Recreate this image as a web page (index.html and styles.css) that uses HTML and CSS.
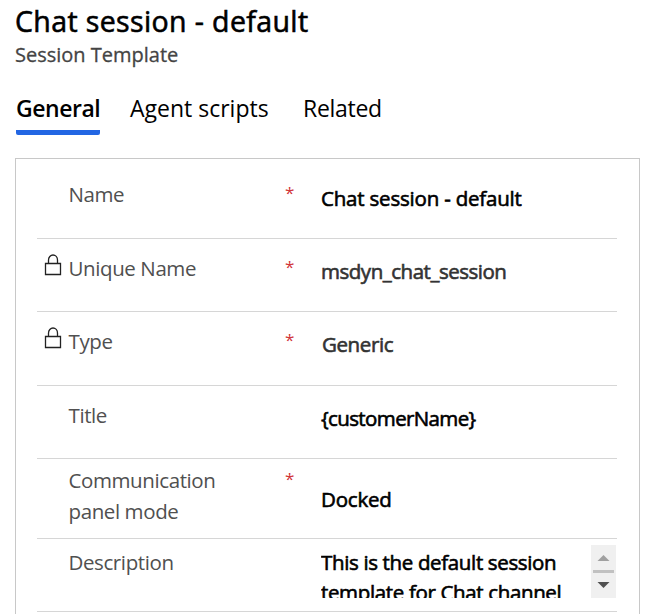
FILE: index.html
```html
<!DOCTYPE html>
<html lang="en">
<head>
<meta charset="utf-8">
<title>Chat session - default</title>
<link rel="stylesheet" href="styles.css">
</head>
<body>
<header class="header">
  <h1 class="title">Chat session - default</h1>
  <p class="subtitle">Session Template</p>
</header>
<nav class="tabs">
  <a class="tab tab-active">General</a>
  <a class="tab tab-scripts">Agent scripts</a>
  <a class="tab tab-related">Related</a>
</nav>
<main class="panel">
  <div class="row row-name">
    <span class="lock"></span>
    <span class="label">Name</span>
    <span class="required">*</span>
    <span class="value">Chat session - default</span>
  </div>
  <div class="row">
    <svg class="lock" viewBox="0 0 18 22"><path d="M1.500 9.500h15v11h-15zM4.500 9.500V6a4.500 5 0 0 1 9 0v3.500"/></svg>
    <span class="label">Unique Name</span>
    <span class="required">*</span>
    <span class="value readonly schema">msdyn_chat_session</span>
  </div>
  <div class="row row-type">
    <svg class="lock" viewBox="0 0 18 22"><path d="M1.500 9.500h15v11h-15zM4.500 9.500V6a4.500 5 0 0 1 9 0v3.500"/></svg>
    <span class="label">Type</span>
    <span class="required">*</span>
    <span class="value readonly generic">Generic</span>
  </div>
  <div class="row">
    <span class="lock"></span>
    <span class="label">Title</span>
    <span class="required"></span>
    <span class="value customer">{customerName}</span>
  </div>
  <div class="row row-mode">
    <span class="lock"></span>
    <span class="label mode">Communication<br>panel mode</span>
    <span class="required">*</span>
    <span class="value docked">Docked</span>
  </div>
  <div class="row row-description">
    <span class="lock"></span>
    <span class="label">Description</span>
    <span class="required"></span>
    <div class="value textarea">
      <div class="text">This is the default session<br>template for Chat channel</div>
      <svg class="scrollbar" viewBox="0 0 25 53"><path class="up" d="M6.500 16 12.500 10l6 6z"/><path class="thumb" d="M2 25h21v3H2z"/><path class="down" d="M6.500 37h12l-6 6z"/></svg>
    </div>
  </div>
</main>
</body>
</html>
```

FILE: styles.css
```css
* { box-sizing: border-box; }

body {
  margin: 0;
  height: 614px;
  overflow: hidden;
  background: #fff;
  color: #000;
  font-family: "Open Sans", "Noto Sans", sans-serif;
}

.header { padding: 1px 0 0 15px; white-space: nowrap; }

.title {
  margin: 0;
  font-size: 28.500px;
  line-height: 40px;
  font-weight: 400;
  letter-spacing: 0.38px;
  -webkit-text-stroke: 0.6px;
}

.subtitle {
  margin: 0;
  font-size: 20px;
  line-height: 28px;
  color: #444;
  -webkit-text-stroke: 0.3px;
}

.tabs {
  display: flex;
  gap: 30px;
  margin-top: 20px;
  padding-left: 16px;
  height: 69px;
}

.tab { height: 46px; font-size: 23px; line-height: 38px; white-space: nowrap; }

.tab-active {
  width: 84px;
  border-bottom: 5px solid #2266e3;
  border-radius: 2px;
  font-weight: 600;
  letter-spacing: -0.45px;
}

.tab-scripts { width: 138px; }

.tab-related { margin-left: 5px; letter-spacing: -0.3px; }

.panel {
  width: 625px;
  height: 480px;
  margin-left: 15px;
  padding: 0 22px 0 21px;
  border: 1px solid #c8c8c8;
}

.row {
  display: grid;
  grid-template-columns: 32px 216px 36px 1fr;
  height: 73px;
  border-bottom: 1px solid #d6d6d6;
  padding-top: 14px;
  font-size: 20.500px;
  line-height: 30px;
  white-space: nowrap;
}

.row-name { height: 80px; padding-top: 20px; }
.row-type { height: 74px; }
.row-mode { height: 80px; padding-top: 6px; }
.row-description { padding-top: 8px; }

.lock { width: 18px; height: 22px; margin: 1px 0 0 7px; fill: none; stroke: #222; stroke-width: 1.3; }

.label { margin-left: -0.5px; color: #505050; letter-spacing: -0.4px; }
.mode { line-height: 31px; }

.required { color: #d13438; font-size: 17px; line-height: 28px; }

.value { padding-top: 3px; letter-spacing: -0.2px; -webkit-text-stroke: 0.6px; }
.row-name .value { padding-top: 4px; }
.readonly { color: #333; }
.schema { letter-spacing: -0.48px; }
.generic { padding-left: 1px; letter-spacing: -0.4px; }
.customer { letter-spacing: -0.62px; }
.row-mode .docked { padding-top: 19px; }

.textarea {
  display: flex;
  justify-content: space-between;
  height: 53px;
  margin-top: -2px;
  padding: 0 1px 0 0;
  overflow: hidden;
  letter-spacing: -0.35px;
}

.text { padding-top: 2px; }

.scrollbar { width: 25px; height: 53px; background: #f0f0f0; }
.up { fill: #a0a0a0; }
.thumb { fill: #c1c1c1; }
.down { fill: #505050; }
```
